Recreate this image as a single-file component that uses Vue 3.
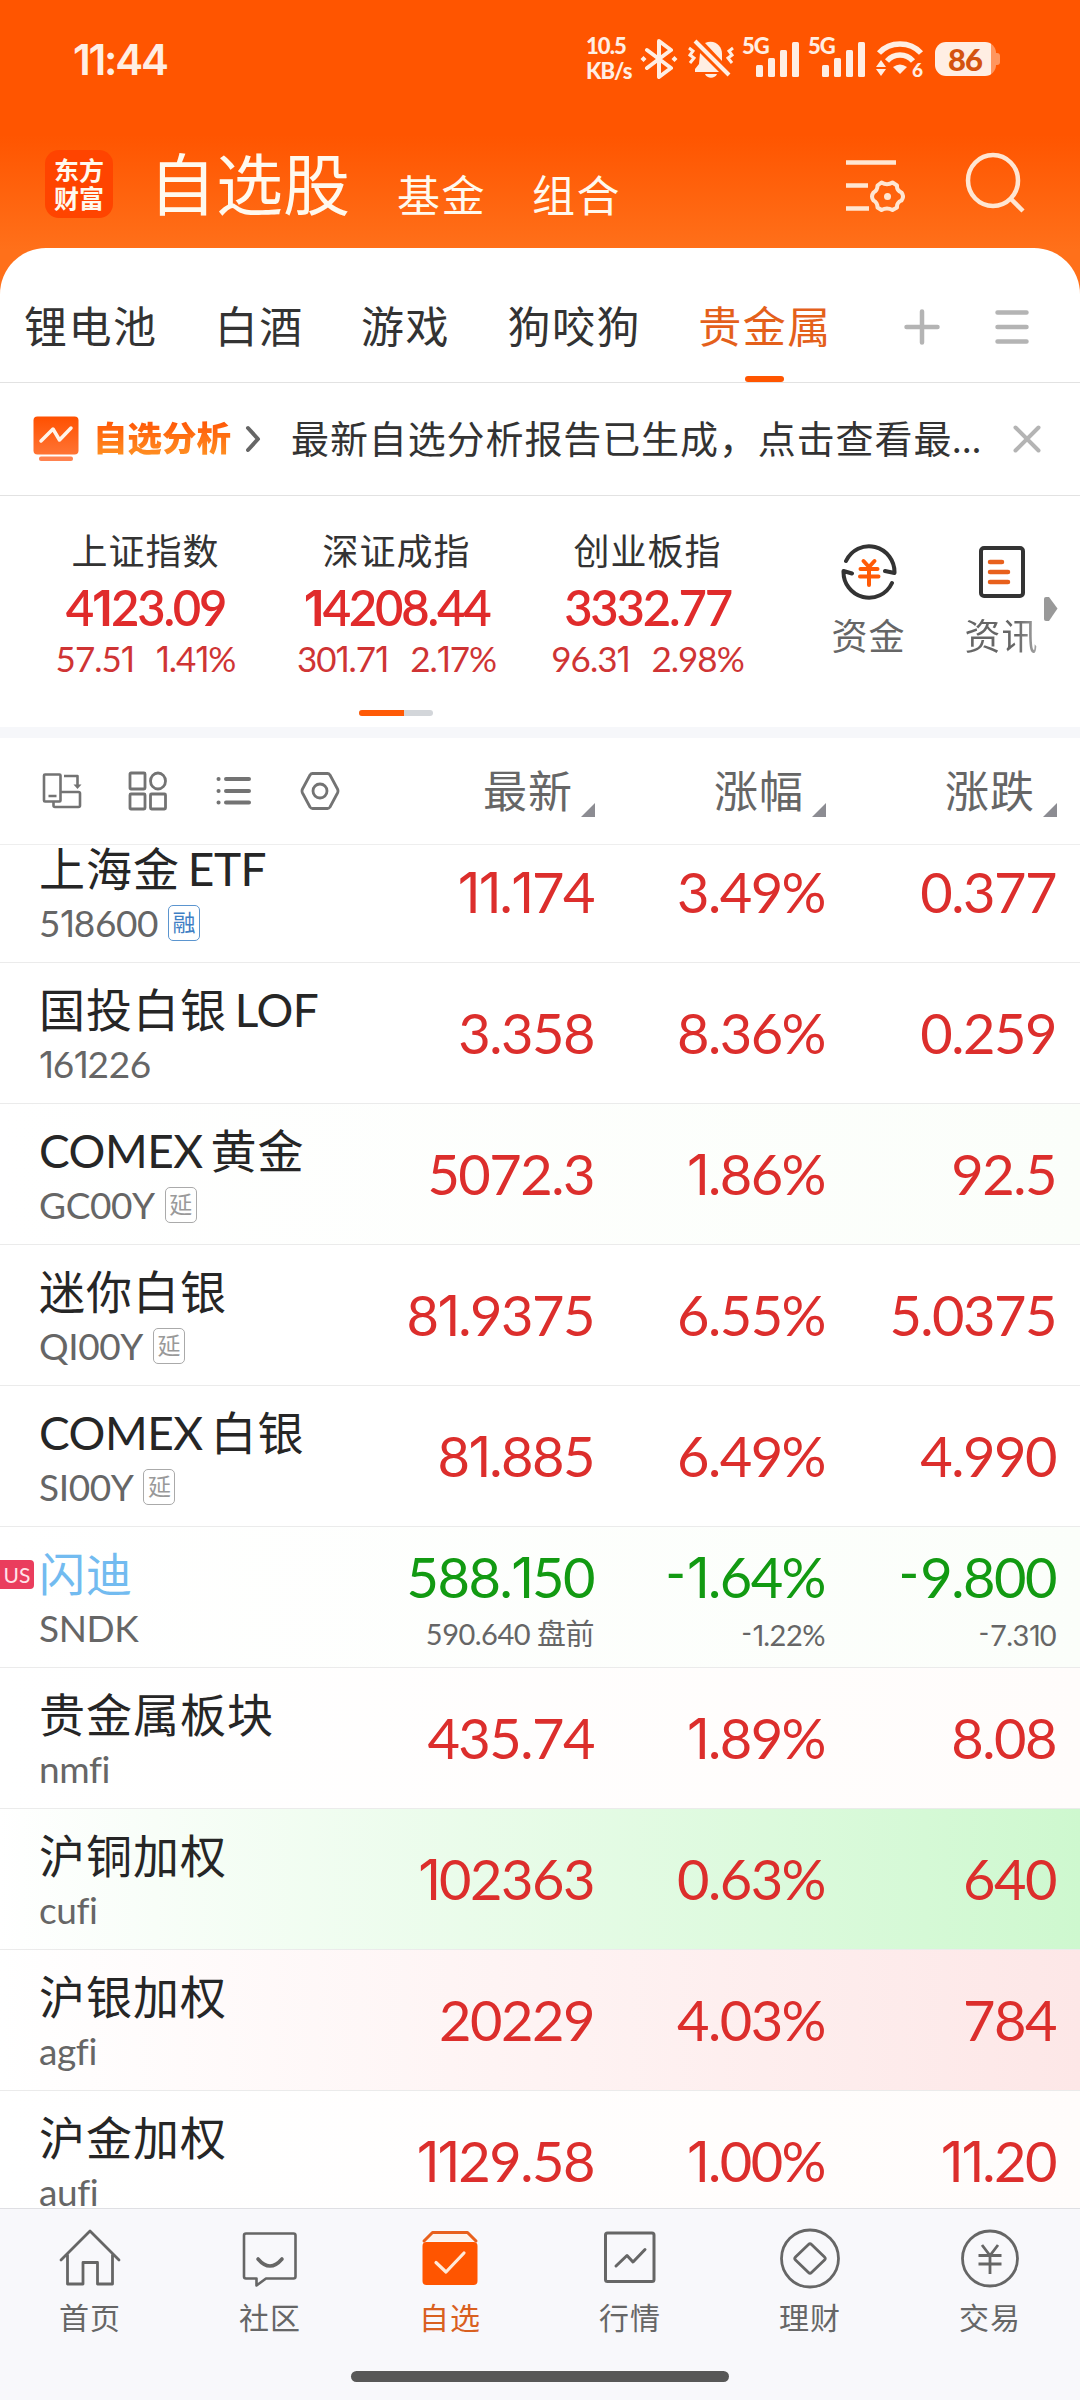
<template>
  <div class="phone">
    <!-- 顶部：状态栏 + 标题栏 -->
    <header class="top">
      <div class="status-bar">
        <span class="clock">11:44</span>
        <div class="status-icons">
          <div class="net-speed">
            <span>10.5</span>
            <span>KB/s</span>
          </div>
          <svg class="ic-bt" width="38" height="40" viewBox="0 0 38 40" fill="none" stroke="#ffeee3" stroke-width="4" stroke-linejoin="round" stroke-linecap="round">
            <path d="M7 11L31 29L19 38V2L31 11L7 29" />
            <path d="M3.5 17l3 3-3 3-3-3zM34.5 17l3 3-3 3-3-3z" fill="#ffeee3" stroke="none" />
          </svg>
          <svg class="ic-bell" width="46" height="40" viewBox="0 0 46 40" fill="none" stroke="#ffeee3">
            <path d="M17 4C27 0 34 7 34 15V22z" fill="#ffeee3" stroke="none" />
            <path d="M12 14L31 33H7V30L11 25z" fill="#ffeee3" stroke="none" />
            <path d="M17 35H29C27 40 19 40 17 35z" fill="#ffeee3" stroke="none" />
            <path d="M7 2L41 36" stroke-width="4" />
            <path d="M1 9l4 3-3 4 4 3-4 5M45 9l-4 3 3 4-4 3 4 5" stroke-width="3" />
          </svg>
          <div v-for="n in 2" :key="n" class="signal">
            <span class="signal-label">5G</span>
            <svg width="44" height="35" viewBox="0 0 44 35" fill="#ffeee3">
              <rect x="0" y="23" width="7" height="12" rx="1.5" />
              <rect x="12" y="16" width="7" height="19" rx="1.5" />
              <rect x="24" y="8" width="7" height="27" rx="1.5" />
              <rect x="36" y="0" width="7" height="35" rx="1.5" />
            </svg>
          </div>
          <svg class="ic-wifi" width="48" height="38" viewBox="0 0 48 38" fill="none" stroke="#ffeee3" stroke-width="5.5">
            <path d="M3 13C14 1 34 1 45 13" />
            <path d="M11 21C18 13 30 13 37 21" />
            <path d="M17 27Q24 22 31 27L24 34z" fill="#ffeee3" stroke="none" />
            <path d="M5 20L10 27H0zM5 36L10 29H0z" fill="#ffeee3" stroke="none" />
            <text class="wifi-num" x="36" y="37">6</text>
          </svg>
          <div class="battery">
            <span>86</span>
          </div>
        </div>
      </div>
      <div class="title-bar">
        <div class="logo">
          <span>东方</span>
          <span>财富</span>
        </div>
        <span class="title-main">自选股</span>
        <span class="title-sub">基金</span>
        <span class="title-sub">组合</span>
        <svg class="ic-filter" width="60" height="54" viewBox="0 0 60 54" fill="none" stroke="#ffe6d2" stroke-width="4.5">
          <path d="M1 4.5H51M1 27.5H23M1 50.5H24" />
          <path stroke-width="4" d="M36.5 24.5Q42 28 47.5 24.5L52 27.5Q51.5 32.5 56.5 34.5Q59.5 38.5 56.5 42.5Q51.5 44.5 52 49.5L47.5 52Q42 49 36.5 52L32.5 49.5Q32.5 44.5 28.5 42.5Q25.5 38.5 28.5 34.5Q32.5 32.5 32.5 27.5z" stroke-linejoin="round" />
          <circle cx="42.5" cy="38.5" r="3.5" fill="#ffe6d2" stroke="none" />
        </svg>
        <svg class="ic-search" width="60" height="62" viewBox="0 0 60 62" fill="none" stroke="#ffe6d2" stroke-width="4.5">
          <ellipse cx="28" cy="28.5" rx="25" ry="25.5" />
          <path d="M45 46L58 59" />
        </svg>
      </div>
    </header>

    <main class="sheet">
      <!-- 分组 -->
      <nav class="groups">
        <span
          v-for="g in groups"
          :key="g"
          class="group"
          :class="{ active: g === activeGroup }"
        >{{ g }}</span>
        <svg class="ic-plus" width="36" height="36" viewBox="0 0 36 36" stroke="#b4b4b4" stroke-width="4.5" stroke-linecap="round">
          <path d="M2.5 18H33.5M18 2.5V33.5" />
        </svg>
        <svg class="ic-menu" width="34" height="36" viewBox="0 0 34 36" stroke="#b4b4b4" stroke-width="4.5" stroke-linecap="round">
          <path d="M2.5 3.5H31.5M2.5 18H31.5M2.5 32.5H31.5" />
        </svg>
      </nav>

      <!-- 自选分析提示 -->
      <div class="notice">
        <svg width="46" height="46" viewBox="0 0 46 46">
          <defs>
            <linearGradient id="noticeBg" x1="0" y1="0" x2="0" y2="1">
              <stop offset="0" stop-color="#ff5000" />
              <stop offset="1" stop-color="#ff7434" />
            </linearGradient>
          </defs>
          <rect x="0.5" y="0.5" width="45" height="38" rx="4" fill="url(#noticeBg)" />
          <rect x="6" y="40.5" width="34" height="4.5" rx="2" fill="#ff8350" />
          <path d="M8 25L20 13L26.5 24L38 12" fill="none" stroke="#fff4ea" stroke-width="3.5" stroke-linecap="round" stroke-linejoin="round" />
        </svg>
        <span class="notice-tag">自选分析</span>
        <svg class="ic-chevron" width="16" height="28" viewBox="0 0 16 28" fill="none" stroke="#666" stroke-width="4" stroke-linecap="round" stroke-linejoin="round">
          <path d="M3 3L13 14L3 25" />
        </svg>
        <span class="notice-text">最新自选分析报告已生成，点击查看最...</span>
        <svg class="ic-close" width="28" height="28" viewBox="0 0 28 28" stroke="#b4b4b4" stroke-width="4" stroke-linecap="round">
          <path d="M2.5 2.5L25.5 25.5M25.5 2.5L2.5 25.5" />
        </svg>
      </div>

      <!-- 指数 -->
      <section class="indices">
        <div class="index-row">
          <div v-for="item in indices" :key="item.name" class="index">
            <span class="index-name">{{ item.name }}</span>
            <span class="index-value"><span v-for="(r, k) in runs(item.value)" :key="k" :class="runClass(r)">{{ r }}</span></span>
            <div class="index-change">
              <span><span v-for="(r, k) in runs(item.diff)" :key="k" :class="runClass(r)">{{ r }}</span></span>
              <span><span v-for="(r, k) in runs(item.rate)" :key="k" :class="runClass(r)">{{ r }}</span></span>
            </div>
          </div>
          <div class="shortcut">
            <svg width="58" height="58" viewBox="0 0 58 58" fill="none" stroke="#333" stroke-width="4" stroke-linecap="round" stroke-linejoin="round">
              <path d="M6 18A25.5 26 0 0 1 54.5 30L45 28" />
              <path d="M52 40A25.5 26 0 0 1 3.5 28L12 30.5" />
              <path d="M23.5 18L29 24L34.5 18M20.5 26H37.5M20 33.5H38.5M29 26V42" stroke="#ff5a06" />
            </svg>
            <span>资金</span>
          </div>
          <div class="shortcut">
            <svg width="58" height="58" viewBox="0 0 58 58" fill="none" stroke="#333" stroke-width="4" stroke-linecap="round">
              <rect x="8" y="5" width="42" height="48" rx="3" />
              <path d="M17 19H29M17 29H35M17 39H35" stroke="#e8601c" stroke-width="4.5" />
            </svg>
            <span class="faded">资讯</span>
          </div>
          <svg class="ic-more" width="14" height="24" viewBox="0 0 14 24" fill="#999">
            <path d="M0 2Q0 0 2 0H5L13.5 11.5L5 24H2Q0 24 0 22z" />
          </svg>
        </div>
        <div class="pager"><i></i></div>
      </section>

      <!-- 表头 -->
      <div class="table-head">
        <div class="tools">
          <svg width="40" height="40" viewBox="0 0 40 40" fill="none" stroke="#737373" stroke-width="2.6" stroke-linejoin="round">
            <path d="M3 3.5H17.5Q18.5 3.5 18.5 4.5V29.5Q18.5 30.5 17.5 30.5H3Q2 30.5 2 29.5V4.5Q2 3.5 3 3.5zM6.5 25H14.5" />
            <path d="M22 5H35.5V16M19 21H36.5Q38 21 38 22.5V34.5Q38 36 36.5 36H13Q11.5 36 11.5 34.5V31" />
            <path d="M31.5 13.5H39.5L35.5 18z" fill="#737373" stroke="none" />
          </svg>
          <svg width="40" height="40" viewBox="0 0 40 40" fill="none" stroke="#737373" stroke-width="2.8">
            <rect x="2" y="2" width="15" height="16" rx="1" />
            <ellipse cx="30" cy="10" rx="7.5" ry="8" />
            <rect x="2" y="23" width="15" height="15" rx="1" />
            <rect x="22.5" y="23" width="15" height="15" rx="1" />
          </svg>
          <svg width="40" height="40" viewBox="0 0 40 40" fill="none" stroke="#737373" stroke-width="4" stroke-linecap="round">
            <path d="M12 8H35M12 20H35M12 31.5H35M4.5 8h.1M4.5 20h.1M4.5 31.5h.1" />
          </svg>
          <svg width="40" height="40" viewBox="0 0 40 40" fill="none" stroke="#737373" stroke-width="2.8" stroke-linejoin="round">
            <path d="M12.5 2.5H27.5Q29 2.5 30 4L37.5 18Q38.5 20 37.5 22L30 36Q29 37.5 27.5 37.5H12.5Q11 37.5 10 36L2.5 22Q1.5 20 2.5 18L10 4Q11 2.5 12.5 2.5z" />
            <circle cx="20" cy="20" r="7" />
          </svg>
        </div>
        <div v-for="c in columns" :key="c" class="th">
          <span>{{ c }}</span>
          <i class="sort"></i>
        </div>
      </div>

      <!-- 股票列表 -->
      <div class="list">
        <div class="list-inner">
          <div v-for="s in stocks" :key="s.code" class="row" :class="s.flash">
            <div class="stock">
              <span v-if="s.market" class="market">{{ s.market }}</span>
              <span class="name" :class="{ link: s.market }"><span v-for="(r, k) in runs(s.name)" :key="k" :class="runClass(r)">{{ r }}</span></span>
              <div class="code">
                <span><span v-for="(r, k) in runs(s.code)" :key="k" :class="runClass(r)">{{ r }}</span></span>
                <span v-if="s.tag" class="tag" :class="{ margin: s.tag === '融' }">{{ s.tag }}</span>
              </div>
            </div>
            <div v-for="(v, i) in s.values" :key="i" class="cell" :class="s.down ? 'down' : 'up'">
              <span class="value"><span v-for="(r, k) in runs(v)" :key="k" :class="runClass(r)">{{ r }}</span></span>
              <span v-if="s.extra" class="extra"><span v-for="(r, k) in runs(s.extra[i])" :key="k" :class="runClass(r)">{{ r }}</span></span>
            </div>
          </div>
        </div>
      </div>
    </main>

    <!-- 底部导航 -->
    <footer class="tabbar">
      <div class="tabs">
        <div class="tab">
          <svg width="64" height="62" viewBox="0 0 64 62" fill="none" stroke="#666" stroke-width="2.8" stroke-linejoin="round" stroke-linecap="round">
            <path d="M3 33L32 4L61 33M9.5 28V57H25V35.5H39.5V57H54.5V28" />
          </svg>
          <span>首页</span>
        </div>
        <div class="tab">
          <svg width="64" height="62" viewBox="0 0 64 62" fill="none" stroke="#666" stroke-width="2.6" stroke-linejoin="round" stroke-linecap="round">
            <path d="M8 6.5H55.5Q57.5 6.5 57.5 8.5V49.5Q57.5 51.5 55.5 51.5H28L18.5 58.5V51.5H8Q6 51.5 6 49.5V8.5Q6 6.5 8 6.5z" />
            <path d="M20 32Q32 46 44 32" stroke-width="3.6" />
          </svg>
          <span>社区</span>
        </div>
        <div class="tab active">
          <svg width="64" height="62" viewBox="0 0 64 62" fill="none" stroke-linejoin="round" stroke-linecap="round">
            <path d="M6 14L14.5 5.5H49.5L58 14" fill="#fdf3ec" stroke="#e8601c" stroke-width="3" />
            <rect x="4.5" y="15" width="55" height="43" rx="4" fill="#ff5500" />
            <path d="M18 35.5L28 45L46 26" stroke="#ffe9d8" stroke-width="3.2" />
          </svg>
          <span>自选</span>
        </div>
        <div class="tab">
          <svg width="64" height="62" viewBox="0 0 64 62" fill="none" stroke="#666" stroke-width="3" stroke-linejoin="round" stroke-linecap="round">
            <rect x="7.5" y="6" width="48.5" height="48.5" rx="2" />
            <path d="M18 39L29 28.5L35 35L47 22.5" />
          </svg>
          <span>行情</span>
        </div>
        <div class="tab">
          <svg width="64" height="62" viewBox="0 0 64 62" fill="none" stroke="#666" stroke-width="2.8" stroke-linejoin="round">
            <circle cx="32" cy="31.5" r="28.5" />
            <path d="M30.5 17.5Q32 16 33.5 17.5L46.5 30Q48 31.5 46.5 33L33.5 45.5Q32 47 30.5 45.5L17.5 33Q16 31.5 17.5 30z" />
          </svg>
          <span>理财</span>
        </div>
        <div class="tab">
          <svg width="64" height="62" viewBox="0 0 64 62" fill="none" stroke="#666" stroke-width="2.8">
            <circle cx="32" cy="31.5" r="27.5" />
            <path d="M24 18L32 28.5L40 18M20.5 28.5H43.5M20.5 37H43.5M32 28.5V47" />
          </svg>
          <span>交易</span>
        </div>
      </div>
      <div class="home-bar"></div>
    </footer>
  </div>
</template>

<script setup>
import { ref } from 'vue'

const activeGroup = ref('贵金属')
const groups = ['锂电池', '白酒', '游戏', '狗咬狗', '贵金属']
const columns = ['最新', '涨幅', '涨跌']

const indices = [
  { name: '上证指数', value: '4123.09', diff: '57.51', rate: '1.41%' },
  { name: '深证成指', value: '14208.44', diff: '301.71', rate: '2.17%' },
  { name: '创业板指', value: '3332.77', diff: '96.31', rate: '2.98%' },
]

// flash: 行情刷新时的背景渐变
const stocks = [
  { name: '上海金 ETF', code: '518600', tag: '融', values: ['11.174', '3.49%', '0.377'] },
  { name: '国投白银 LOF', code: '161226', values: ['3.358', '8.36%', '0.259'] },
  { name: 'COMEX 黄金', code: 'GC00Y', tag: '延', values: ['5072.3', '1.86%', '92.5'], flash: 'green-faint' },
  { name: '迷你白银', code: 'QI00Y', tag: '延', values: ['81.9375', '6.55%', '5.0375'] },
  { name: 'COMEX 白银', code: 'SI00Y', tag: '延', values: ['81.885', '6.49%', '4.990'] },
  {
    name: '闪迪',
    code: 'SNDK',
    market: 'US',
    down: true,
    values: ['588.150', '-1.64%', '-9.800'],
    extra: ['590.640 盘前', '-1.22%', '-7.310'],
    flash: 'green-faint',
  },
  { name: '贵金属板块', code: 'nmfi', values: ['435.74', '1.89%', '8.08'], flash: 'red-faint' },
  { name: '沪铜加权', code: 'cufi', values: ['102363', '0.63%', '640'], flash: 'green' },
  { name: '沪银加权', code: 'agfi', values: ['20229', '4.03%', '784'], flash: 'red' },
  { name: '沪金加权', code: 'aufi', values: ['1129.58', '1.00%', '11.20'], flash: 'red-faint' },
]

// 把文本拆成几段：数字 1、负号和大写字母单独设置字距
const runs = (text) => text.split(/(1+|-|[A-Z]{3,})/).filter(Boolean)

const runClass = (run) => {
  if (/^1+$/.test(run)) return 'one'
  if (run === '-') return 'minus'
  if (/^[A-Z]{3,}$/.test(run)) return 'latin'
  return null
}
</script>

<style>
body {
  margin: 0;
  background: #fff;
}
</style>

<style scoped>
.phone {
  width: 1080px;
  height: 2400px;
  display: flex;
  flex-direction: column;
  overflow: hidden;
  background: linear-gradient(to bottom, #ff5500 135px, #ff701a 250px);
  font-family: Lato, "Noto Sans CJK SC", sans-serif;
  color: #333;
}
svg {
  display: block;
  flex: none;
}
span {
  white-space: pre;
}

/* 字距 */
.one {
  font-family: Inter, sans-serif;
  letter-spacing: -0.035em;
  line-height: 1;
}
.minus {
  vertical-align: 0.09em;
  letter-spacing: 0.02em;
  line-height: 1;
}
.latin {
  letter-spacing: -0.01em;
}

/* 状态栏 */
.top {
  height: 248px;
  flex: none;
}
.status-bar {
  height: 118px;
  display: flex;
  align-items: center;
  color: #ffeee3;
}
.clock {
  margin-left: 73px;
  width: 513px;
  font-family: Inter, sans-serif;
  font-size: 42px;
  font-weight: 600;
  letter-spacing: -2.2px;
}
.status-icons {
  display: flex;
  align-items: center;
}
.net-speed {
  width: 54px;
  display: flex;
  flex-direction: column;
  margin-top: -2px;
  font-size: 22px;
  line-height: 25px;
  font-weight: 900;
  letter-spacing: -0.9px;
}
.ic-bell {
  margin-left: 10px;
}
.signal {
  display: flex;
  flex-direction: column;
  align-items: flex-end;
  width: 58px;
  height: 41px;
  margin: -5px 0 0 8px;
}
.signal-label {
  align-self: flex-start;
  height: 6px;
  font-size: 22px;
  line-height: 20px;
  font-weight: 900;
  letter-spacing: -1px;
}
.ic-wifi {
  margin-left: 10px;
}
.wifi-num {
  fill: #ffeee3;
  stroke: none;
  font-size: 19px;
  font-weight: 900;
}
.battery {
  position: relative;
  width: 61px;
  height: 34px;
  margin-left: 11px;
  border-radius: 11px;
  background: linear-gradient(to right, #ffeee3 56px, #ff965f 56px);
  display: flex;
  align-items: center;
}
.battery::after {
  content: '';
  position: absolute;
  right: -4px;
  top: 11px;
  width: 4px;
  height: 12px;
  border-radius: 0 3px 3px 0;
  background: #ff965f;
}
.battery span {
  width: 60px;
  text-align: center;
  font-size: 31px;
  font-weight: 900;
  letter-spacing: -1px;
  color: #d4530f;
}

/* 标题栏 */
.title-bar {
  display: flex;
  align-items: flex-end;
  height: 100px;
  color: #fff9ee;
}
.logo {
  width: 68px;
  height: 68px;
  margin-left: 45px;
  border-radius: 14px;
  background: #ff4400;
  display: flex;
  flex-direction: column;
  align-items: center;
  justify-content: center;
  font-size: 25px;
  line-height: 28px;
  font-weight: 700;
}
.title-main {
  margin-left: 36px;
  width: 248px;
  font-size: 67px;
  line-height: 67px;
}
.title-sub {
  width: 135px;
  font-size: 43px;
  line-height: 45px;
  letter-spacing: 1.5px;
}
.ic-filter {
  margin: 0 0 6px 178px;
}
.ic-search {
  margin: 0 0 4px 60px;
}

/* 内容面板 */
.sheet {
  flex: 1;
  min-height: 0;
  display: flex;
  flex-direction: column;
  background: #fff;
  border-radius: 46px 46px 0 0;
  overflow: hidden;
}
.groups {
  height: 134px;
  flex: none;
  display: flex;
  gap: 57.3px;
  padding-left: 24px;
  border-bottom: 1px solid #e2e2e2;
}
.group {
  font-size: 43px;
  letter-spacing: 1.5px;
  line-height: 158px;
  height: 134px;
  display: flex;
  flex-direction: column;
  align-items: center;
}
.group.active {
  color: #e4601b;
}
.group.active::after {
  content: '';
  width: 39px;
  height: 6px;
  margin-top: -30px;
  border-radius: 3px;
  background: #ff5500;
}
.ic-plus {
  margin: 61px 0 0 15px;
}
.ic-menu {
  margin: 61px 0 0 -2px;
}

/* 提示条 */
.notice {
  height: 112px;
  flex: none;
  display: flex;
  align-items: center;
  padding-left: 33px;
  border-bottom: 1px solid #e2e2e2;
}
.notice-tag {
  width: 152px;
  margin: -3px 0 0 14px;
  font-size: 34.5px;
  line-height: 50px;
  font-weight: 900;
  background: linear-gradient(to bottom, #ff5a08 20%, #ff8f22 85%);
  background-clip: text;
  -webkit-background-clip: text;
  color: transparent;
}
.notice-text {
  margin: -5px 0 0 30px;
  width: 722px;
  font-size: 38px;
  letter-spacing: 0.9px;
}

/* 指数 */
.indices {
  height: 231px;
  flex: none;
  border-bottom: 11px solid #f6f7fa;
}
.index-row {
  display: flex;
  padding-left: 20px;
  height: 214px;
}
.index {
  width: 251px;
  display: flex;
  flex-direction: column;
  align-items: center;
  padding-top: 33px;
}
.index-name {
  font-size: 36px;
  letter-spacing: 1px;
  line-height: 44px;
}
.index-value {
  margin-top: 6px;
  font-size: 49px;
  line-height: 56px;
  font-weight: 600;
  letter-spacing: -2.2px;
  color: #e02b2b;
}
.index-change {
  display: flex;
  gap: 22px;
  font-size: 35px;
  line-height: 46px;
  letter-spacing: -1px;
  color: #cf3434;
}
.shortcut {
  width: 133px;
  display: flex;
  flex-direction: column;
  align-items: center;
  padding-top: 47px;
  font-size: 36px;
  letter-spacing: 1px;
  line-height: 44px;
  color: #666;
}
.shortcut:nth-of-type(4) {
  margin-left: 29px;
}
.shortcut span {
  margin-top: 13px;
}
.faded {
  background: linear-gradient(to right, #666 70%, #aaa);
  background-clip: text;
  -webkit-background-clip: text;
  color: transparent;
}
.ic-more {
  margin: 101px 0 0 -24px;
}
.pager {
  width: 74px;
  height: 6px;
  margin-left: 359px;
  border-radius: 3px;
  background: #d3d6da;
}
.pager i {
  display: block;
  width: 45px;
  height: 6px;
  border-radius: 3px 0 0 3px;
  background: #ff5a06;
}

/* 表头 */
.table-head {
  height: 106px;
  flex: none;
  display: grid;
  grid-template-columns: 364px 231px 231px 231px;
  border-bottom: 1px solid #eee;
}
.tools {
  display: flex;
  align-items: center;
  gap: 46px;
  padding-left: 42px;
}
.th {
  display: flex;
  justify-content: flex-end;
  align-items: center;
  font-size: 44px;
  letter-spacing: 1px;
  color: #666;
}
.th span {
  margin-bottom: 4px;
}
.sort {
  width: 14px;
  height: 14px;
  margin: 38px 0 0 8px;
  background: #8c8c92;
  clip-path: polygon(100% 0, 100% 100%, 0 100%);
}

/* 列表 */
.list {
  flex: 1;
  min-height: 0;
  overflow: hidden;
}
.list-inner {
  margin-top: -23px;
}
.row {
  height: 140px;
  display: grid;
  grid-template-columns: 364px 231px 231px 231px;
  padding-right: 23px;
  border-bottom: 1px solid #ebebeb;
}
.row.green {
  background: linear-gradient(to right, #fff, #cef8cf);
}
.row.red {
  background: linear-gradient(to right, #fff, #fde7e7);
}
.row.green-faint {
  background: linear-gradient(to right, #fff, #fbfefa);
}
.row.red-faint {
  background: linear-gradient(to right, #fff, #fffcfb);
}
.stock {
  position: relative;
  display: flex;
  flex-direction: column;
  padding: 19px 0 0 39px;
}
.name {
  font-size: 46px;
  letter-spacing: 1px;
  word-spacing: -5px;
  line-height: 56px;
  color: #262626;
}
.name.link {
  color: #72bbf0;
}
.code {
  display: flex;
  align-items: center;
  height: 40px;
  margin-top: 6px;
  gap: 10px;
  font-size: 37px;
  line-height: 40px;
  letter-spacing: -0.4px;
  color: #666;
}
.tag {
  width: 30px;
  height: 34px;
  border: 1.5px solid #aaa;
  border-radius: 5px;
  font-size: 23px;
  line-height: 33px;
  letter-spacing: 0;
  text-align: center;
  color: #999;
}
.tag.margin {
  border-color: #5b95cf;
  color: #3f7fc4;
}
/* 市场角标，贴左边 */
.market {
  position: absolute;
  left: 0;
  top: 33px;
  width: 34px;
  height: 29px;
  border-radius: 0 4px 4px 0;
  background: #ea3d5d;
  color: #ffe3e8;
  font-size: 21px;
  line-height: 29px;
  text-align: center;
}
.cell {
  display: flex;
  flex-direction: column;
  align-items: flex-end;
  justify-content: center;
  padding-right: 1px;
}
.up {
  color: #dc2e2c;
}
.down {
  color: #129a12;
}
.value {
  font-size: 56px;
  line-height: 64px;
  letter-spacing: -1.5px;
}
.extra {
  margin: 6px 0 -4px;
  font-size: 29px;
  line-height: 38px;
  letter-spacing: -0.5px;
  color: #666;
}

/* 底部导航 */
.tabbar {
  height: 191px;
  flex: none;
  border-top: 1px solid #dfdfe3;
  background: #f8f8fb;
}
.tabs {
  display: flex;
  height: 162px;
}
.tab {
  width: 180px;
  display: flex;
  flex-direction: column;
  align-items: center;
  padding-top: 18px;
  font-size: 30px;
  letter-spacing: 1px;
  color: #666;
}
.tab span {
  margin-top: 8px;
  line-height: 40px;
}
.tab.active {
  color: #d9601f;
}
.home-bar {
  width: 378px;
  height: 11px;
  margin: 0 auto;
  border-radius: 6px;
  background: #575757;
}
</style>
